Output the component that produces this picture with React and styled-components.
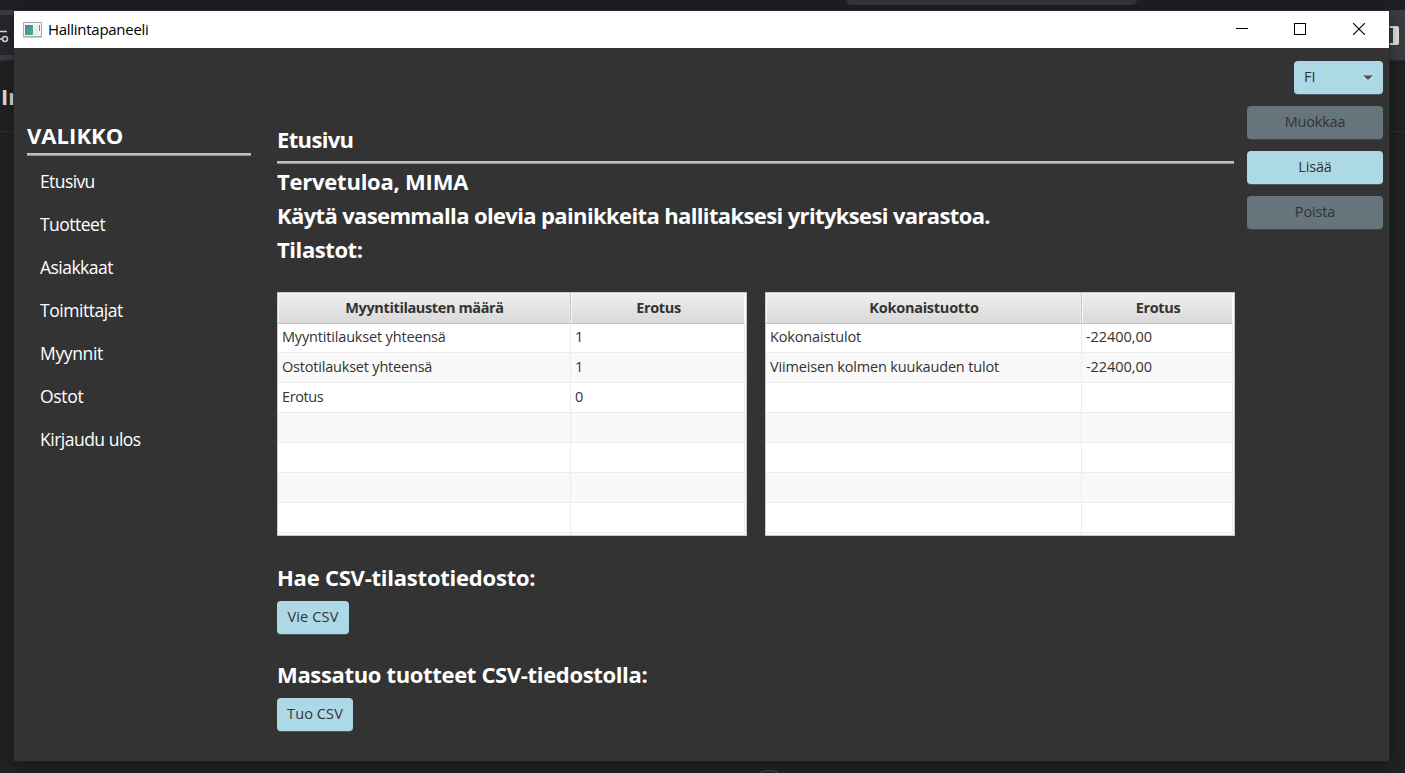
import React from "react";
import styled, { createGlobalStyle } from "styled-components";

const GlobalStyle = createGlobalStyle`
  * { box-sizing: border-box; }
  html, body { margin: 0; padding: 0; background: #212121; }
  body { font-family: "Open Sans", "Noto Sans", sans-serif; overflow: hidden; }
`;

const Desktop = styled.div`
  position: relative;
  width: 1405px;
  height: 773px;
  overflow: hidden;
  background: #212121;
`;

const TabStrip = styled.div`
  height: 10px;
  background: #1f1e24;
  padding-left: 846px;
`;

const TabPill = styled.div`
  width: 291px;
  height: 5px;
  background: #35343a;
  border-radius: 0 0 9px 9px;
`;

const BrowserBar = styled.div`
  height: 51px;
  padding: 5px 0 6px;
  display: flex;
  align-items: center;
  justify-content: space-between;
  background: #3c3b41;
  border-bottom: 1px solid #2c2b30;
`;

const AddressEdge = styled.div`
  width: 200px;
  height: 40px;
  background: #28272c;
  display: flex;
  align-items: center;
`;

const PageHeader = styled.div`
  height: 71px;
  padding: 19px 0 0 1px;
  border-bottom: 1px solid #2e2e2e;
  color: #dedede;
  font-size: 22px;
  font-weight: 700;
  line-height: 32px;
`;

const PageFooter = styled.div`
  height: 641px;
  display: flex;
  align-items: flex-end;
  padding-left: 756px;
`;

const Window = styled.div`
  position: absolute;
  left: 14px;
  top: 11px;
  width: 1375px;
  height: 750px;
  display: flex;
  flex-direction: column;
  background: #333;
  box-shadow: 0 0 0 1px rgba(38, 38, 38, 0.7), 0 2px 14px rgba(0, 0, 0, 0.4);
`;

const TitleBar = styled.div`
  height: 37px;
  flex: none;
  display: flex;
  align-items: center;
  background: #fff;
  padding-left: 9px;
`;

const WindowTitle = styled.div`
  flex: 1;
  margin-left: 6px;
  color: #000;
  font-size: 15px;
  line-height: 34px;
  padding-bottom: 2px;
  letter-spacing: ${(p) => p.$track || 0}px;
`;

const WindowControls = styled.div`
  display: flex;
  align-items: center;
  gap: 46px;
  padding: 0 24px 2px 0;
  svg { display: block; }
  svg:last-child { margin-left: 1px; }
`;

const Body = styled.div`
  flex: 1;
  display: flex;
  padding: 0 6px 0 13px;
`;

const Sidebar = styled.nav`
  width: 224px;
  padding-top: 70px;
`;

const Rule = styled.div`
  height: 3px;
  background: linear-gradient(#d0d0d0, #b5b5b5 50%, #8a8a8a);
`;

const Heading = styled.div`
  height: 34px;
  color: #fff;
  font-size: 22px;
  font-weight: 700;
  line-height: 32px;
  white-space: nowrap;
  letter-spacing: ${(p) => p.$track || 0}px;
`;

const SectionTitle = styled(Heading)`
  line-height: 34px;
`;

const NavList = styled.div`
  padding: 4px 0 0 13px;
`;

const SidebarRule = styled(Rule)`
  margin-top: 1px;
`;

const NavItem = styled.div`
  height: 43px;
  line-height: 43px;
  color: #fff;
  font-size: 17.5px;
  letter-spacing: ${(p) => p.$track || 0}px;
`;

const Main = styled.main`
  width: 958px;
  margin: 0 12px 0 26px;
  padding-top: 74px;
`;

const TitleBlock = styled.div`
  height: 39px;
`;

const MainRule = styled(Rule)`
  width: 957px;
  margin-bottom: 1px;
`;

const Tables = styled.div`
  display: flex;
  gap: 18px;
  margin: 25px 0 25px;
`;

const Table = styled.div`
  width: 470px;
  height: 244px;
  border: 1px solid #c8c8c8;
  background: #fff;
  overflow: hidden;
`;

const Row = styled.div`
  display: grid;
  grid-template-columns: ${(p) => p.$split}px 1fr;
  height: 30px;
  padding-right: 1px;
  background: ${(p) => (p.$odd ? "#f9f9f9" : "#fff")};
`;

const HeadCell = styled.div`
  border-right: 1px solid #c4c4c4;
  border-bottom: 1px solid #c4c4c4;
  box-shadow: inset 1px 1px 0 #f8f8f8, inset -1px 0 0 #ececec;
  background: linear-gradient(#efefef, #d9d9d9);
  color: #333;
  font-size: 14.5px;
  font-weight: 700;
  line-height: 30px;
  padding-left: 1px;
  text-align: center;
  letter-spacing: ${(p) => p.$track || 0}px;
  &:last-child {
    border-right-color: #fafafa;
    padding-left: 2px;
    box-shadow: inset 1px 1px 0 #f8f8f8;
  }
`;

const Cell = styled.div`
  border-right: 1px solid #ededed;
  border-bottom: 1px solid #ededed;
  padding-left: 4px;
  color: #333;
  font-size: 14.5px;
  line-height: 28px;
  white-space: nowrap;
  letter-spacing: ${(p) => p.$track || 0}px;
`;

const CsvSection = styled.section`
  margin-bottom: 24px;
`;

const Button = styled.button`
  display: block;
  width: ${(p) => p.$w}px;
  height: 33px;
  margin: 0;
  padding: 0 0 1px;
  border: 0;
  border-radius: 4px;
  background: ${(p) => (p.disabled ? "#65757b" : "#add8e6")};
  box-shadow: 0 1px 0 ${(p) => (p.disabled ? "#39464a" : "#4b5c62")};
  color: #333;
  font-family: inherit;
  font-size: 14.5px;
  line-height: 32px;
  letter-spacing: ${(p) => p.$track || 0}px;
`;

const CsvButton = styled(Button)`
  margin-top: 6px;
`;

const Actions = styled.aside`
  width: 136px;
  padding-top: 13px;
  display: flex;
  flex-direction: column;
  align-items: flex-end;
  gap: 12px;
`;

const LanguageSelect = styled(Button)`
  display: flex;
  align-items: center;
  justify-content: space-between;
  padding: 0 10px 1px;
  svg { margin-top: 2px; }
`;

const NAV = [
  ["Etusivu", -0.6],
  ["Tuotteet", -0.52],
  ["Asiakkaat", -0.53],
  ["Toimittajat", -0.45],
  ["Myynnit", -0.35],
  ["Ostot", -0.3],
  ["Kirjaudu ulos", -0.5],
];

const SALES = {
  split: 293,
  head: [["Myyntitilausten määrä", -0.38], ["Erotus", -0.35]],
  rows: [
    [["Myyntitilaukset yhteensä", -0.17], ["1", 0]],
    [["Ostotilaukset yhteensä", -0.2], ["1", 0]],
    [["Erotus", -0.4], ["0", 0]],
  ],
};

const REVENUE = {
  split: 316,
  head: [["Kokonaistuotto", -0.25], ["Erotus", -0.35]],
  rows: [
    [["Kokonaistulot", -0.15], ["-22400,00", -0.05]],
    [["Viimeisen kolmen kuukauden tulot", -0.17], ["-22400,00", -0.05]],
  ],
};

function StatTable({ data }) {
  const rows = Array.from({ length: 8 }, (_, i) => data.rows[i] || [["", 0], ["", 0]]);
  return (
    <Table>
      <Row $split={data.split}>
        {data.head.map(([text, track]) => (
          <HeadCell key={text} $track={track}>{text}</HeadCell>
        ))}
      </Row>
      {rows.map((row, i) => (
        <Row key={i} $split={data.split} $odd={i % 2 === 1}>
          {row.map(([text, track], j) => (
            <Cell key={j} $track={track}>{text}</Cell>
          ))}
        </Row>
      ))}
    </Table>
  );
}

function AppIcon() {
  return (
    <svg width="19" height="16" viewBox="0 0 19 16">
      <defs>
        <linearGradient id="pane" x1="0" y1="0" x2="1" y2="1">
          <stop offset="0" stopColor="#4d7fa6" />
          <stop offset="1" stopColor="#53b374" />
        </linearGradient>
      </defs>
      <rect x="0.5" y="0.5" width="18" height="14" fill="#f4f4f4" stroke="#a9adb3" />
      <rect x="2" y="3" width="8" height="10" fill="url(#pane)" />
      <rect x="11" y="3" width="4" height="10" fill="#e9ecee" />
      <rect x="16" y="3" width="1" height="6" fill="#4f9a8c" />
      <path d="M0 15.5H19" stroke="#c9ccd0" />
    </svg>
  );
}

export default function App() {
  return (
    <>
      <GlobalStyle />
      <Desktop>
        <TabStrip><TabPill /></TabStrip>
        <BrowserBar>
          <AddressEdge>
            <svg width="10" height="16" viewBox="0 0 10 16" fill="none" stroke="#d6d6d8" strokeWidth="1.5">
              <path d="M0 4.5H7M0 12H2.5" />
              <circle cx="5" cy="12" r="2.5" />
            </svg>
          </AddressEdge>
          <svg width="20" height="20" viewBox="0 0 20 20">
            <rect x="3" y="1" width="11" height="19" rx="2" fill="#dcdcde" />
            <rect x="2" y="3" width="6" height="15" fill="#3c3b41" />
          </svg>
        </BrowserBar>
        <PageHeader>In</PageHeader>
        <PageFooter>
          <svg width="26" height="3" viewBox="0 0 26 3" fill="none" stroke="#4a4a4a">
            <path d="M4 2.5Q13 -1 22 2.5" />
          </svg>
        </PageFooter>

        <Window>
          <TitleBar>
            <AppIcon />
            <WindowTitle $track={-0.28}>Hallintapaneeli</WindowTitle>
            <WindowControls>
              <svg width="12" height="12" viewBox="0 0 12 12" stroke="#000">
                <path d="M0 5.5H12" />
              </svg>
              <svg width="12" height="12" viewBox="0 0 12 12" fill="none" stroke="#000">
                <rect x="0.5" y="0.5" width="11" height="11" />
              </svg>
              <svg width="12" height="12" viewBox="0 0 12 12" stroke="#000" strokeWidth="1.1">
                <path d="M0 0L12 12M12 0L0 12" />
              </svg>
            </WindowControls>
          </TitleBar>
          <Body>
            <Sidebar>
              <SectionTitle $track={0.05}>VALIKKO</SectionTitle>
              <SidebarRule />
              <NavList>
                {NAV.map(([text, track]) => (
                  <NavItem key={text} $track={track}>{text}</NavItem>
                ))}
              </NavList>
            </Sidebar>
            <Main>
              <TitleBlock><SectionTitle $track={-0.65}>Etusivu</SectionTitle></TitleBlock>
              <MainRule />
              <Heading $track={-0.23}>Tervetuloa, MIMA</Heading>
              <Heading $track={-0.63}>Käytä vasemmalla olevia painikkeita hallitaksesi yrityksesi varastoa.</Heading>
              <Heading $track={-0.42}>Tilastot:</Heading>
              <Tables>
                <StatTable data={SALES} />
                <StatTable data={REVENUE} />
              </Tables>
              <CsvSection>
                <Heading $track={-0.23}>Hae CSV-tilastotiedosto:</Heading>
                <CsvButton $w={72} $track={0.15}>Vie CSV</CsvButton>
              </CsvSection>
              <CsvSection>
                <Heading $track={-0.34}>Massatuo tuotteet CSV-tiedostolla:</Heading>
                <CsvButton $w={76} $track={0.1}>Tuo CSV</CsvButton>
              </CsvSection>
            </Main>
            <Actions>
              <LanguageSelect $w={89}>
                FI
                <svg width="10" height="6" viewBox="0 0 10 6">
                  <path d="M0 1.5H10L5 6.5Z" fill="#dcedf3" />
                  <path d="M0 0.5H10L5 5Z" fill="#4a5052" />
                </svg>
              </LanguageSelect>
              <Button $w={136} $track={-0.2} disabled>Muokkaa</Button>
              <Button $w={136} $track={-0.2}>Lisää</Button>
              <Button $w={136} $track={-0.15} disabled>Poista</Button>
            </Actions>
          </Body>
        </Window>
      </Desktop>
    </>
  );
}
